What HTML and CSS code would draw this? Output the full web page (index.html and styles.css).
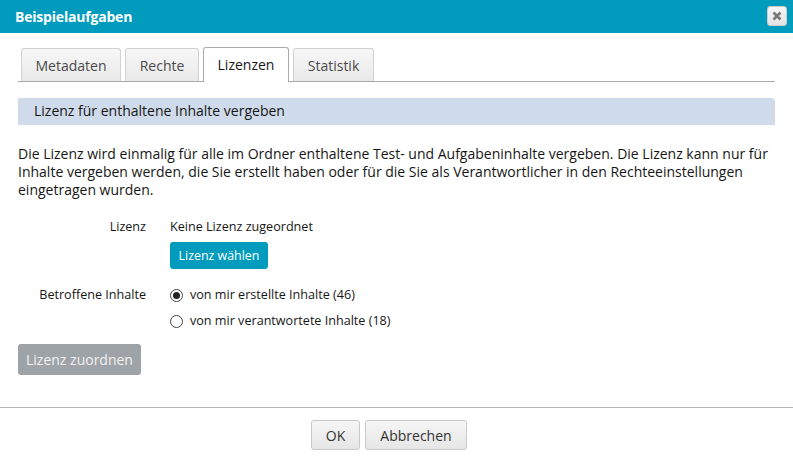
FILE: index.html
```html
<!DOCTYPE html>
<html lang="de">
<head>
<meta charset="utf-8">
<title>Beispielaufgaben</title>
<link rel="stylesheet" href="styles.css">
</head>
<body>
<div class="modal">
  <div class="modal-header">
    <h1 class="modal-title">Beispielaufgaben</h1>
    <button class="close-btn" aria-label="Schließen">
      <svg width="10" height="10" viewBox="0 0 10 10"><path d="M1.5 1.5 L8.5 8.5 M8.5 1.5 L1.5 8.5" stroke="#777" stroke-width="2.6" stroke-linecap="butt"/></svg>
    </button>
  </div>
  <div class="modal-body">
    <ul class="tabs">
      <li class="tab">Metadaten</li>
      <li class="tab">Rechte</li>
      <li class="tab active">Lizenzen</li>
      <li class="tab">Statistik</li>
    </ul>
    <div class="section-head">Lizenz für enthaltene Inhalte vergeben</div>
    <p class="info">Die Lizenz wird einmalig für alle im Ordner enthaltene Test- und Aufgabeninhalte vergeben. Die Lizenz kann nur für Inhalte vergeben werden, die Sie erstellt haben oder für die Sie als Verantwortlicher in den Rechteeinstellungen eingetragen wurden.</p>
    <div class="form">
      <div class="form-row">
        <div class="form-label">Lizenz</div>
        <div class="form-value">
          <div class="value-text">Keine Lizenz zugeordnet</div>
          <button class="btn-primary">Lizenz wählen</button>
        </div>
      </div>
      <div class="form-row rows-radio">
        <div class="form-label">Betroffene Inhalte</div>
        <div class="form-value radios">
          <label class="radio"><span class="radio-dot checked"></span>von mir erstellte Inhalte (46)</label>
          <label class="radio"><span class="radio-dot"></span>von mir verantwortete Inhalte (18)</label>
        </div>
      </div>
    </div>
    <button class="btn-disabled">Lizenz zuordnen</button>
  </div>
  <div class="modal-footer">
    <button class="btn-default">OK</button>
    <button class="btn-default">Abbrechen</button>
  </div>
</div>
</body>
</html>
```
FILE: styles.css
```css
* { box-sizing: border-box; }
html, body {
  margin: 0;
  padding: 0;
  background: #fff;
  font-family: "Open Sans", "DejaVu Sans", sans-serif;
  color: #161616;
}
.modal {
  width: 793px;
  height: 472px;
  background: #fff;
}
.modal-header {
  height: 33px;
  background: #009bbd;
  display: flex;
  align-items: center;
  justify-content: space-between;
  padding: 0 6px 0 15px;
}
.modal-title {
  margin: 0;
  font-size: 14px;
  font-weight: 700;
  color: #fff;
  letter-spacing: -0.2px;
}
.close-btn {
  width: 20px;
  height: 20px;
  padding: 0;
  border: 1px solid #ccc;
  border-radius: 3px;
  background: linear-gradient(#f6f6f6, #e4e4e4);
  display: flex;
  align-items: center;
  justify-content: center;
  margin-top: -1px;
}
.modal-body {
  padding: 15px 18px 0 18px;
  height: 375px;
  border-bottom: 1px solid #b5b5b5;
}
.tabs {
  list-style: none;
  margin: 0;
  padding: 0 0 0 3px;
  display: flex;
  gap: 4px;
  align-items: flex-end;
  width: 757px;
  border-bottom: 1px solid #a9a9a9;
  height: 34px;
}
.tab {
  font-size: 14px;
  color: #4a4a4a;
  padding: 0;
  text-align: center;
  height: 33px;
  line-height: 33px;
  border: 1px solid #d2d2d2;
  border-bottom: none;
  border-radius: 3px 3px 0 0;
  background: linear-gradient(#f7f7f7, #e9e9e9);
}
.tab:nth-child(1) { width: 100px; }
.tab:nth-child(2) { width: 74px; }
.tab:nth-child(4) { width: 81px; }
.tab.active {
  width: 86px;
  height: 35px;
  background: #fff;
  border-color: #aaa;
  color: #161616;
  margin-bottom: -1px;
  line-height: 34px;
}
.section-head {
  margin-top: 16px;
  width: 757px;
  height: 27px;
  line-height: 26px;
  background: #cfdbea;
  border-radius: 0 4px 0 0;
  padding-left: 16px;
  font-size: 14px;
  color: #161616;
}
.info {
  margin: 20px 0 0 0;
  font-size: 14px;
  line-height: 18px;
  width: 772px;
}
.form {
  margin-top: 19px;
  display: flex;
  flex-direction: column;
  gap: 17px;
}
.form-row {
  display: flex;
  gap: 24px;
}
.form-label {
  width: 128px;
  text-align: right;
  font-size: 12.6px;
  line-height: 18px;
}
.form-value {
  font-size: 12.6px;
  line-height: 18px;
}
.value-text { margin-bottom: 6px; }
.btn-primary {
  font-family: inherit;
  font-size: 12.4px;
  color: #fff;
  background: #009bbd;
  border: none;
  border-radius: 3px;
  height: 27px;
  width: 98px;
  padding: 0;
}
.radios {
  display: flex;
  flex-direction: column;
  gap: 8px;
}
.radio {
  display: flex;
  align-items: center;
  gap: 7px;
}
.radio-dot {
  width: 13px;
  height: 13px;
  border: 1px solid #444;
  border-radius: 50%;
  display: inline-block;
  position: relative;
  background: #fff;
}
.radio-dot.checked::after {
  content: "";
  position: absolute;
  left: 2px;
  top: 2px;
  width: 7px;
  height: 7px;
  border-radius: 50%;
  background: #222;
}
.btn-disabled {
  margin-top: 14px;
  font-family: inherit;
  font-size: 14px;
  color: #f2f2f2;
  background: #9ea3a8;
  border: none;
  border-radius: 3px;
  height: 31px;
  width: 123px;
  padding: 0;
}
.modal-footer {
  display: flex;
  justify-content: center;
  gap: 5px;
  padding-top: 12px;
  padding-right: 15px;
}
.btn-default {
  font-family: inherit;
  font-size: 14px;
  color: #333;
  height: 30px;
  border: 1px solid #c8c8c8;
  border-radius: 3px;
  background: linear-gradient(#f6f6f6, #e6e6e6);
  padding: 0;
}
.btn-default:first-child { width: 49px; }
.btn-default:last-child { width: 102px; }
```
